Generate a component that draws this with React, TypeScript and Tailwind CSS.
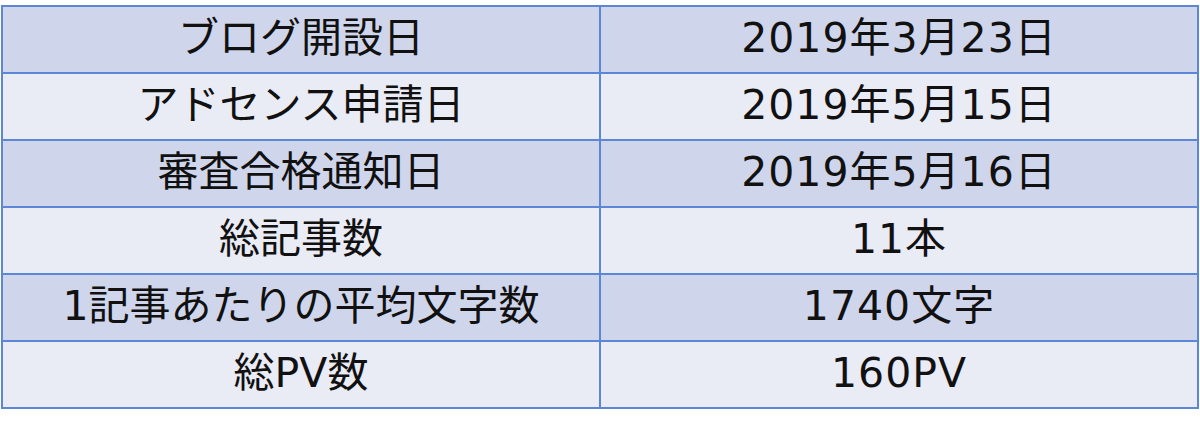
import React from "react"

const rows = [
  ["ブログ開設日", "2019年3月23日"],
  ["アドセンス申請日", "2019年5月15日"],
  ["審査合格通知日", "2019年5月16日"],
  ["総記事数", "11本"],
  ["1記事あたりの平均文字数", "1740文字"],
  ["総PV数", "160PV"],
]

export default function App() {
  return (
    <div className="w-[1200px] h-[432px] bg-white pt-[5px] pl-[1px]">
      <table
        className="w-[1198px] border-collapse text-[#111] text-[41px] leading-none"
        style={{ fontFamily: '"DejaVu Sans", "Noto Sans CJK JP", sans-serif' }}
      >
        <tbody>
          {rows.map(([label, value], idx) => (
            <tr key={idx} className={idx % 2 === 0 ? "bg-[#cfd5ea]" : "bg-[#e9ebf5]"}>
              <td className="w-1/2 h-[67px] border-2 border-[#5b87d6] text-center align-middle p-0 pb-[3px]">
                {label}
              </td>
              <td className="w-1/2 h-[67px] border-2 border-[#5b87d6] text-center align-middle p-0 pb-[3px] tracking-[1px]">
                {value}
              </td>
            </tr>
          ))}
        </tbody>
      </table>
    </div>
  )
}
